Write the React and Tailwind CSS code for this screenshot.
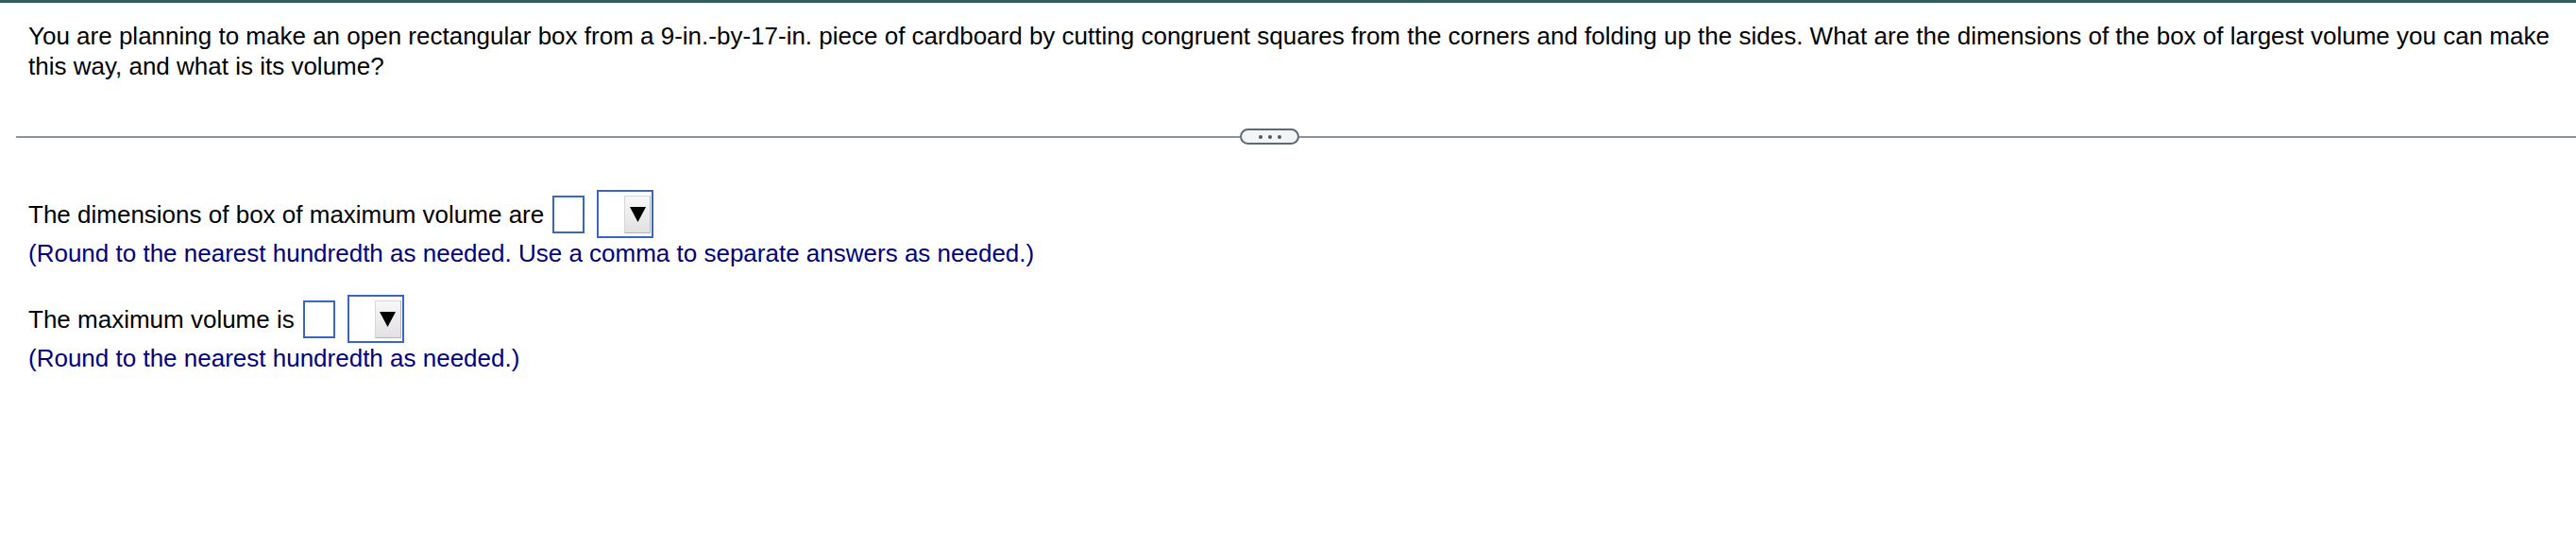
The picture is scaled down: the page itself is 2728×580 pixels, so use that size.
import React from "react";

function AnswerBox() {
  return <span className="ml-[9px] inline-block w-[34px] h-[40px] border-2 border-[#3a64c6] bg-white" />;
}

function UnitSelect() {
  return (
    <span className="ml-[13px] flex w-[60px] h-[51px] items-center justify-end border-2 border-[#3a64c6] bg-white pr-[1px]">
      <span className="flex w-[28px] h-[40px] items-center justify-center border border-t-[#d6d6d6] border-l-[#d6d6d6] border-r-[#b4b4b4] border-b-[#b4b4b4] bg-gradient-to-b from-[#f7f7f7] to-[#e2e2e2]">
        <svg width="17" height="16" viewBox="0 0 17 16">
          <polygon points="0,0 17,0 8.5,16" fill="#000" />
        </svg>
      </span>
    </span>
  );
}

export default function App() {
  return (
    <div
      className="min-h-[580px] bg-white border-t-[3px] border-[#2f5e5b] text-black"
      style={{ fontFamily: '"Liberation Sans", Arial, sans-serif' }}
    >
      <p className="pl-[30px] pr-[16px] pt-[19px] text-[26px] leading-[32px]">
        You are planning to make an open rectangular box from a 9-in.-by-17-in. piece of cardboard by cutting
        congruent squares from the corners and folding up the sides. What are the dimensions of the box of largest
        volume you can make this way, and what is its volume?
      </p>

      <div className="mt-[50px] flex h-[17px] items-center pl-[17px]">
        <div className="h-[2px] w-[1296px] bg-[#8b939d]" />
        <div className="flex h-[17px] w-[63px] items-center justify-center gap-[6px] rounded-full border-2 border-[#5e6978] bg-[#f2f4f6]">
          <span className="h-[4px] w-[4px] rounded-full bg-[#4b5461]" />
          <span className="h-[4px] w-[4px] rounded-full bg-[#4b5461]" />
          <span className="h-[4px] w-[4px] rounded-full bg-[#4b5461]" />
        </div>
        <div className="h-[2px] flex-1 bg-[#8b939d]" />
      </div>

      <div className="px-[30px] pt-[48px] text-[26px] leading-[32px]">
        <div className="flex items-center">
          <span>The dimensions of box of maximum volume are</span>
          <AnswerBox />
          <UnitSelect />
        </div>
        <p className="text-[#000080]">
          (Round to the nearest hundredth as needed. Use a comma to separate answers as needed.)
        </p>

        <div className="mt-[28px] flex items-center">
          <span>The maximum volume is</span>
          <AnswerBox />
          <UnitSelect />
        </div>
        <p className="text-[#000080]">(Round to the nearest hundredth as needed.)</p>
      </div>
    </div>
  );
}
